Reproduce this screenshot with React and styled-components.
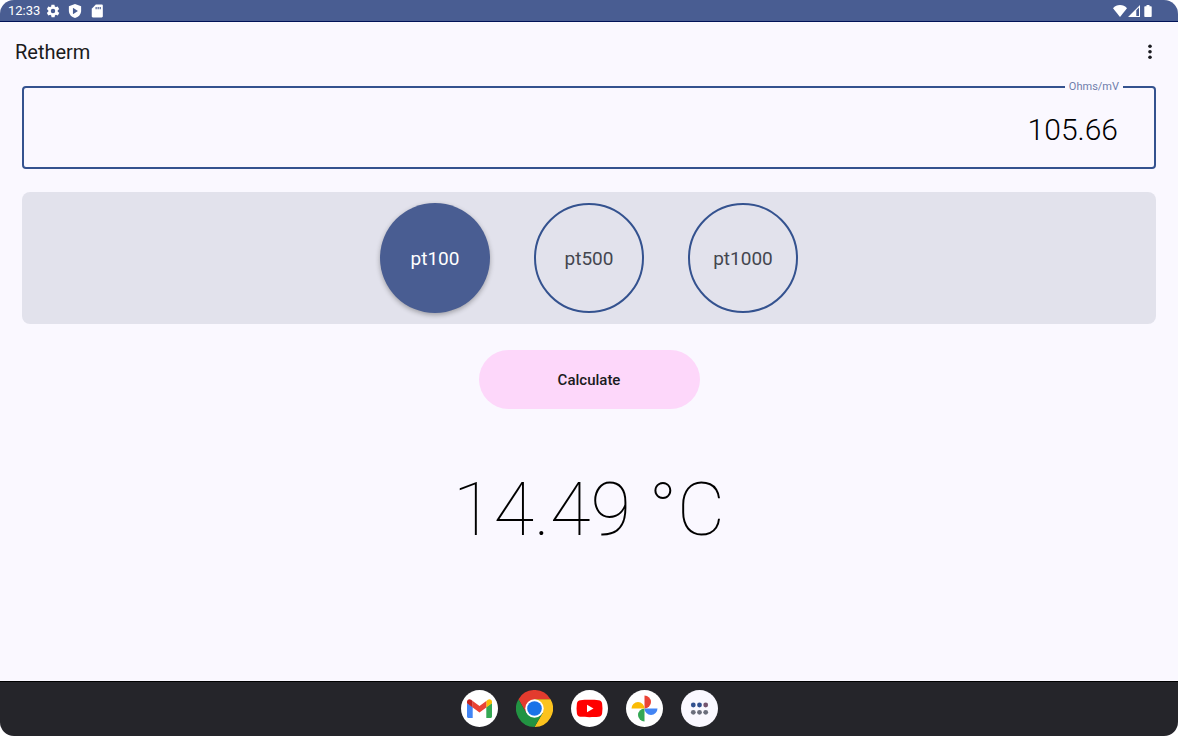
import {useState} from "react";
import styled, {createGlobalStyle} from "styled-components";

const sensors = ["pt100", "pt500", "pt1000"];

const nominal = {pt100: 100, pt500: 500, pt1000: 1000};

// Callendar-Van Dusen, positive branch
const A = 3.9083e-3;
const B = -5.775e-7;

const toCelsius = (ohms, sensor) => {
    const ratio = ohms / nominal[sensor];
    return (-A + Math.sqrt(A * A - 4 * B * (1 - ratio))) / (2 * B);
};

function StatusIcons() {
    return <StatusGroup>
        <svg width="14" height="14" viewBox="1 1 22 22" fill="#fff">
            <path d="M19.4 13c0-.3.1-.6.1-1s0-.7-.1-1l2.1-1.6c.2-.2.3-.4.1-.7l-2-3.4c-.1-.2-.4-.3-.6-.2l-2.5 1c-.5-.4-1.1-.7-1.7-1l-.4-2.6c0-.3-.2-.5-.5-.5h-4c-.2 0-.4.2-.5.5L9.2 5.1c-.6.3-1.2.6-1.7 1l-2.5-1c-.2-.1-.5 0-.6.2l-2 3.4c-.1.3 0 .5.2.7L4.6 11c0 .3-.1.7-.1 1s0 .7.1 1l-2.1 1.6c-.2.2-.2.4-.1.7l2 3.4c.1.2.4.3.6.2l2.5-1c.5.4 1.1.7 1.7 1l.4 2.6c0 .3.2.5.5.5h4c.2 0 .5-.2.5-.5l.4-2.6c.6-.3 1.2-.6 1.7-1l2.5 1c.2.1.5 0 .6-.2l2-3.4c.1-.2.1-.5-.1-.7zM12 15.500a3.500 3.500 0 1 1 0-7 3.500 3.500 0 0 1 0 7z"/>
        </svg>
        <svg width="14" height="14" viewBox="0 0 24 24">
            <path fill="#fff" d="M12 0 1.500 4v7.500C1.500 17.500 6 22.500 12 24c6-1.500 10.500-6.500 10.500-12.500V4z"/>
            <path fill="#495d92" d="M8.500 6.500v11l8.500-5.500z"/>
        </svg>
        <svg width="14" height="14" viewBox="0 0 24 24">
            <path fill="#fff" d="M20 1H10L3 8v13c0 1.100.9 2 2 2h15c1.100 0 2-.9 2-2V3c0-1.100-.9-2-2-2z"/>
            <path fill="#495d92" d="M9.500 5h2v4h-2zM13 5h2v4h-2zM16.500 5h2v4h-2z"/>
        </svg>
    </StatusGroup>
}

function SignalIcons() {
    return <SignalGroup>
        <svg width="14" height="12" viewBox="0 0 14 12">
            <path fill="#fff" d="M7 12 0 3.200C1.800 1.200 4.300 0 7 0s5.200 1.200 7 3.200z"/>
        </svg>
        <svg width="12" height="12" viewBox="0 0 12 12">
            <path fill="#fff" d="M12 0v12H0zM11 2.600 8.300 5.200V11H11z" fillRule="evenodd"/>
        </svg>
        <svg width="14" height="12" viewBox="0 0 14 12">
            <path fill="#fff" d="M5.500 0h3v1.200h1.500c.4 0 .7.3.7.7v9.400c0 .4-.3.700-.7.700H4c-.4 0-.7-.3-.7-.7V1.900c0-.4.3-.7.7-.7h1.500z"/>
        </svg>
    </SignalGroup>
}

function GmailIcon() {
    return <svg width="37" height="37" viewBox="0 0 37 37">
        <circle cx="18.5" cy="18.5" r="18.5" fill="#fff"/>
        <path fill="#4285f4" d="M6 13v13.500c0 .8.6 1.500 1.500 1.500h4.200V17z"/>
        <path fill="#34a853" d="M31 13v13.500c0 .8-.6 1.500-1.500 1.500h-4.200V17z"/>
        <path fill="#fbbc04" d="M25.300 11v6.400l5.700-4.200v-1.500c0-2.200-2.400-3.300-4.100-2z"/>
        <path fill="#c5221f" d="M6 11.700v1.500l5.700 4.200V11l-1.600-1.300c-1.700-1.300-4.100-.2-4.100 2z"/>
        <path fill="#ea4335" d="M11.700 17.400V11l6.800 5.100 6.800-5.100v6.400l-6.800 5.100z"/>
    </svg>
}

function ChromeIcon() {
    return <svg width="37" height="37" viewBox="0 0 48 48">
        <path fill="#e33b2e" d="M24 24 13.600 30 3.200 12A24 24 0 0 1 44.800 12H24z"/>
        <path fill="#fcc31e" d="M24 24V12h20.800A24 24 0 0 1 24 48l10.400-18z"/>
        <path fill="#229342" d="m34.400 30-10.400 18A24 24 0 0 1 3.200 12l10.400 18L24 24z"/>
        <circle cx="24" cy="24" r="12" fill="#fff"/>
        <circle cx="24" cy="24" r="9.5" fill="#1a73e8"/>
    </svg>
}

function YoutubeIcon() {
    return <svg width="37" height="37" viewBox="0 0 37 37">
        <circle cx="18.5" cy="18.5" r="18.5" fill="#fff"/>
        <path fill="#f00" d="M9.500 10.200C14 9.700 23 9.700 27.500 10.200c2.200.2 3.300 1.300 3.600 3.300.5 3.300.5 6.700 0 10-.3 2-1.400 3.100-3.600 3.300-4.500.5-13.500.5-18 0-2.200-.2-3.300-1.300-3.600-3.300-.5-3.300-.5-6.700 0-10 .3-2 1.400-3.100 3.600-3.300z"/>
        <path fill="#fff" d="M16 14.700v7.600l6.500-3.800z"/>
    </svg>
}

function PhotosIcon() {
    return <svg width="37" height="37" viewBox="0 0 37 37">
        <circle cx="18.5" cy="18.5" r="18.5" fill="#fff"/>
        <path fill="#ea4335" d="M18.500 5.500a6.500 6.500 0 0 1 0 13z"/>
        <path fill="#4285f4" d="M31.500 18.500a6.500 6.500 0 0 1-13 0z"/>
        <path fill="#34a853" d="M18.500 31.500a6.500 6.500 0 0 1 0-13z"/>
        <path fill="#fbbc04" d="M5.500 18.500a6.500 6.500 0 0 1 13 0z"/>
    </svg>
}

function AppsIcon() {
    return <svg width="37" height="37" viewBox="0 0 37 37">
        <circle cx="18.5" cy="18.5" r="18.5" fill="#faf8ff"/>
        <circle cx="12.3" cy="15" r="2.4" fill="#31508f"/>
        <circle cx="18.5" cy="15" r="2.4" fill="#31508f"/>
        <circle cx="24.7" cy="15" r="2.4" fill="#75546f"/>
        <circle cx="12.3" cy="22.3" r="2.4" fill="#6b6e7c"/>
        <circle cx="18.5" cy="22.3" r="2.4" fill="#6b6e7c"/>
        <circle cx="24.7" cy="22.3" r="2.4" fill="#6b6e7c"/>
    </svg>
}

const dockApps = [
    {name: "Gmail", Icon: GmailIcon},
    {name: "Chrome", Icon: ChromeIcon},
    {name: "YouTube", Icon: YoutubeIcon},
    {name: "Photos", Icon: PhotosIcon},
    {name: "All apps", Icon: AppsIcon},
];

export default function App() {
    const [value, setValue] = useState("105.66");
    const [sensor, setSensor] = useState("pt100");
    const [result, setResult] = useState("14.49");

    const onCalculateBtnClick = () => {
        const celsius = toCelsius(parseFloat(value), sensor);
        setResult(Number.isNaN(celsius) ? "--" : celsius.toFixed(2));
    }

    return <>
        <GlobalStyle/>
        <Screen>
            <StatusBar>
                <StatusGroup>
                    <span>12:33</span>
                    <StatusIcons/>
                </StatusGroup>
                <SignalIcons/>
            </StatusBar>
            <AppBar>
                <Title>Retherm</Title>
                <MenuButton type="button" aria-label="More options">
                    <svg width="6" height="16" viewBox="0 0 6 16" fill="#1a1b20">
                        <circle cx="3" cy="2.3" r="1.8"/>
                        <circle cx="3" cy="7.8" r="1.8"/>
                        <circle cx="3" cy="13.3" r="1.8"/>
                    </svg>
                </MenuButton>
            </AppBar>
            <Content>
                <Field>
                    <FieldLegend>
                        <label htmlFor="reading">Ohms/mV</label>
                    </FieldLegend>
                    <FieldInput
                        id="reading"
                        inputMode="decimal"
                        value={value}
                        onChange={e => setValue(e.target.value)}
                    />
                </Field>
                <SensorPanel>
                    {sensors.map(name => (
                        <SensorButton
                            key={name}
                            type="button"
                            $active={name === sensor}
                            aria-pressed={name === sensor}
                            onClick={() => setSensor(name)}
                        >
                            {name}
                        </SensorButton>
                    ))}
                </SensorPanel>
                <CalculateButton type="button" onClick={onCalculateBtnClick}>Calculate</CalculateButton>
                <Result>{result} °C</Result>
            </Content>
            <Dock>
                {dockApps.map(({name, Icon}) => (
                    <DockButton key={name} type="button" aria-label={name}>
                        <Icon/>
                    </DockButton>
                ))}
            </Dock>
        </Screen>
    </>
}

const GlobalStyle = createGlobalStyle`
  * {
    box-sizing: border-box;
  }

  body {
    margin: 0;
    background-color: #fff;
    font-family: Roboto, sans-serif;
  }

  button, input {
    font-family: inherit;
  }

  svg {
    display: block;
  }
`;

const Screen = styled.div`
  display: flex;
  flex-direction: column;
  min-height: 100vh;
  overflow: hidden;
  border-radius: 14px;
  background-color: #faf8ff;
  color: #000;
`;

const StatusBar = styled.header`
  display: flex;
  justify-content: space-between;
  align-items: center;
  height: 22px;
  padding: 0 23px 0 8px;
  border-bottom: 1px solid #001258;
  background-color: #495d92;
  color: #fff;
  font-size: 13px;
`;

const StatusGroup = styled.div`
  display: flex;
  align-items: center;
  gap: 8px;

  & > & {
    margin-left: -2px;
  }
`;

const SignalGroup = styled.div`
  display: flex;
  align-items: center;
  gap: 1px;
`;

const AppBar = styled.div`
  display: flex;
  justify-content: space-between;
  align-items: center;
  height: 59px;
  padding: 0 18px 0 15px;
`;

const Title = styled.h1`
  margin: 0;
  font-size: 20px;
  font-weight: 400;
  color: #1a1b20;
`;

const MenuButton = styled.button`
  display: flex;
  justify-content: center;
  width: 20px;
  padding: 0;
  border: none;
  background-color: transparent;
  cursor: pointer;
`;

const Content = styled.main`
  display: flex;
  flex: 1;
  flex-direction: column;
  align-items: center;
  padding: 0 22px;
`;

const Field = styled.fieldset`
  width: 100%;
  margin: 0;
  padding: 0;
  border: 2px solid #34528f;
  border-radius: 4px;
`;

const FieldLegend = styled.legend`
  margin-left: auto;
  margin-right: 31px;
  padding: 0 4px;
  font-size: 11px;
  line-height: 12px;
  color: #6f7dab;
`;

const FieldInput = styled.input`
  display: block;
  width: 100%;
  height: 74px;
  padding: 0 36px 2px;
  border: none;
  outline: none;
  background-color: transparent;
  color: #000;
  font-size: 30px;
  font-weight: 300;
  text-align: right;
`;

const SensorPanel = styled.div`
  display: flex;
  justify-content: center;
  gap: 44px;
  width: 100%;
  margin-top: 23px;
  padding: 11px;
  border-radius: 8px;
  background-color: #e2e2ec;
`;

const SensorButton = styled.button`
  width: 110px;
  height: 110px;
  padding: 0;
  border: ${({$active}) => $active ? "none" : "2px solid #34528f"};
  border-radius: 50%;
  background-color: ${({$active}) => $active ? "#495d92" : "transparent"};
  box-shadow: ${({$active}) => $active ? "0 2px 5px rgba(0, 0, 0, 0.3)" : "none"};
  color: ${({$active}) => $active ? "#fff" : "#44464f"};
  font-size: 19px;
  cursor: pointer;
`;

const CalculateButton = styled.button`
  width: 221px;
  height: 59px;
  margin-top: 26px;
  padding: 0;
  border: none;
  border-radius: 30px;
  background-color: #fdd7fa;
  color: #1a1b20;
  font-size: 15px;
  font-weight: 500;
  cursor: pointer;
`;

const Result = styled.output`
  margin-top: 57px;
  font-size: 74px;
  font-weight: 100;
  line-height: 88px;
`;

const Dock = styled.nav`
  display: flex;
  justify-content: center;
  align-items: center;
  gap: 18px;
  height: 55px;
  padding-bottom: 2px;
  border-top: 1px solid #000;
  background-color: #25252a;
`;

const DockButton = styled.button`
  padding: 0;
  border: none;
  border-radius: 50%;
  background-color: transparent;
  cursor: pointer;
`;
